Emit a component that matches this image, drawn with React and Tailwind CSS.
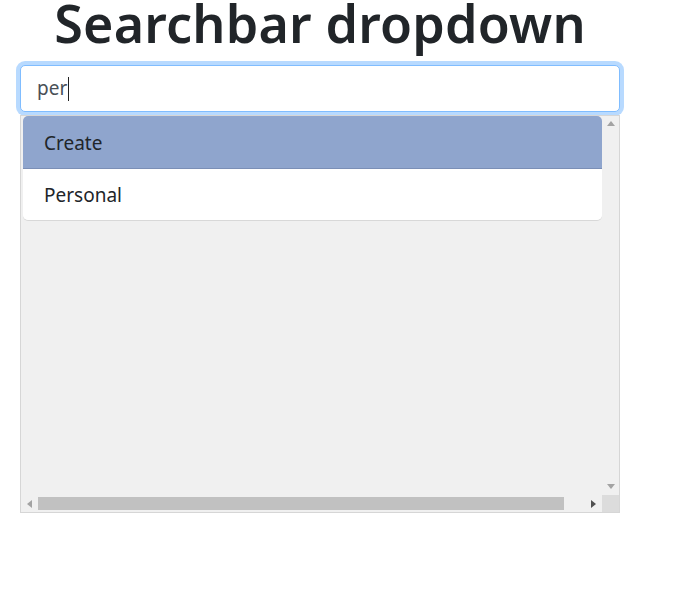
import React from "react";

const FONT = "font-['Noto_Sans','Open_Sans',sans-serif]";

function Arrow({ dir, className }) {
  const pts = {
    up: "0,5 4,0 8,5",
    down: "0,0 8,0 4,5",
    left: "5,0 5,8 0,4",
    right: "0,0 5,4 0,8",
  }[dir];
  const vertical = dir === "up" || dir === "down";
  return (
    <svg width={vertical ? 8 : 5} height={vertical ? 5 : 8} className={className}>
      <polygon points={pts} fill="currentColor" />
    </svg>
  );
}

export default function App() {
  const items = ["Create", "Personal"];
  return (
    <div className={`${FONT} w-[600px] ml-[20px] text-[#212529]`}>
      <h1 className="text-[52px] font-semibold tracking-[0.2px] leading-[46px] text-center mb-[19px]">Searchbar dropdown</h1>

      {/* input */}
      <div className="h-[47px] rounded-[5px] border border-[#80bdff] shadow-[0_0_0_4px_rgba(0,123,255,0.28)] bg-white flex items-center px-[16px] text-[19px] text-[#495057]">
        <span>per</span>
        <span className="w-px h-[24px] bg-[#222] ml-px" />
      </div>

      {/* dropdown with scrollbars */}
      <div className="mt-[3px] h-[398px] border border-[#d6d6d6] bg-[#f0f0f0] flex flex-col">
        <div className="flex flex-1">
          <div className="flex-1 pl-[2px]">
            <div className="rounded-[5px] overflow-hidden shadow-[0_1px_0_#d8d8d8]">
              {items.map((it, i) => (
                <div
                  key={it}
                  className={
                    i === 0
                      ? "h-[53px] bg-[#8fa5cd] border-b border-[#7b8fb6] pl-[21px] pt-[3px] flex items-center text-[19px]"
                      : "h-[51px] bg-white pl-[21px] pt-[2px] flex items-center text-[19px]"
                  }
                >
                  {it}
                </div>
              ))}
            </div>
          </div>
          <div className="w-[17px] flex flex-col items-center justify-between pt-[5px] pb-[6px] text-[#a3a3a3]">
            <Arrow dir="up" />
            <Arrow dir="down" />
          </div>
        </div>
        <div className="h-[17px] flex">
          <div className="flex-1 flex items-center pl-[6px] pr-[6px] gap-[6px]">
            <Arrow dir="left" className="text-[#a3a3a3]" />
            <div className="h-[13px] w-[526px] bg-[#c1c1c1]" />
            <div className="flex-1" />
            <Arrow dir="right" className="text-[#505050]" />
          </div>
          <div className="w-[17px] bg-[#dcdcdc]" />
        </div>
      </div>
    </div>
  );
}
